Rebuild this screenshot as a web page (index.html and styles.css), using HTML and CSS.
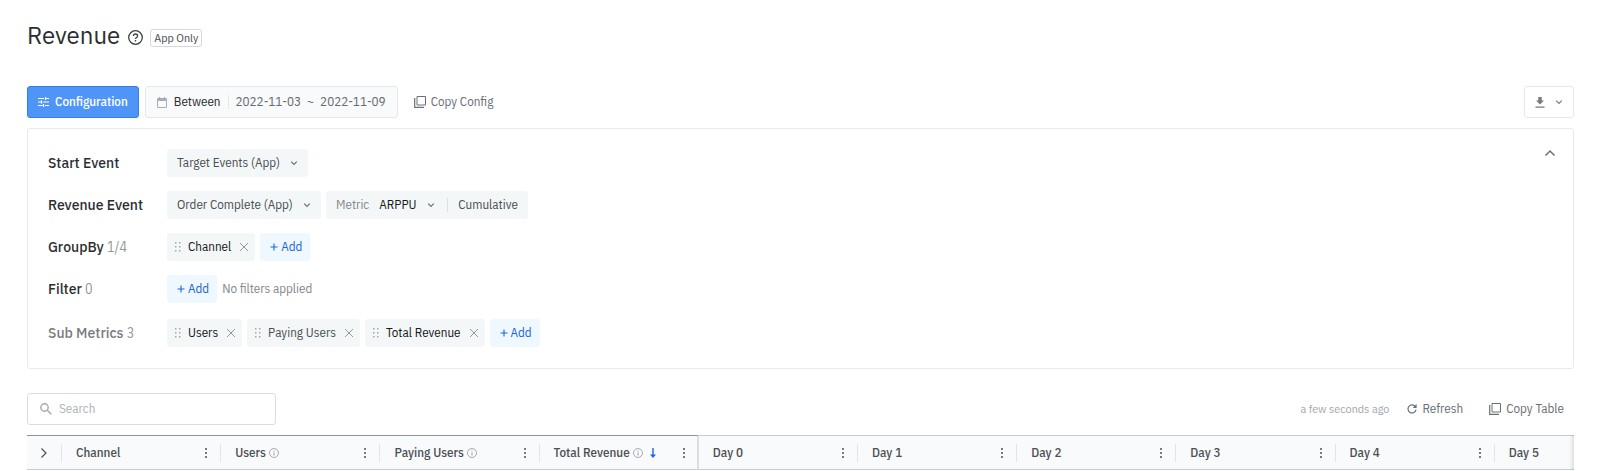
FILE: index.html
```html
<!DOCTYPE html>
<html lang="en">
<head>
  <meta charset="UTF-8" />
  <meta name="viewport" content="width=device-width, initial-scale=1.0"/>
  <title>Revenue</title>
  <link rel="stylesheet" href="styles.css">
</head>
<body>
  <!-- Shared icons -->
  <svg class="sprite" aria-hidden="true">
    <symbol id="chevron" viewBox="0 0 8 8"><path d="M1.2 2.6L4 5.400l2.800-2.800" fill="none" stroke="currentColor" stroke-width="1.200"/></symbol>
    <symbol id="grip" viewBox="0 0 6 10"><path d="M0 0h1.500v1.500H0zM4 0h1.500v1.500H4zM0 4h1.500v1.500H0zM4 4h1.500v1.500H4zM0 8h1.500v1.500H0zM4 8h1.500v1.500H4z" fill="currentColor"/></symbol>
    <symbol id="close" viewBox="0 0 10 10"><path d="M1 1l8 8M9 1l-8 8" fill="none" stroke="currentColor"/></symbol>
    <symbol id="plus" viewBox="0 0 8 8"><path d="M4 .5v7M.5 4h7" fill="none" stroke="currentColor" stroke-width="1.100"/></symbol>
    <symbol id="copy" viewBox="0 0 12 12"><path d="M3 .5h8.500V9H3z" fill="none" stroke="currentColor"/><path d="M.7 2v9.300H10" fill="none" stroke="currentColor" stroke-width="1.200"/></symbol>
    <symbol id="kebab" viewBox="0 0 2 10"><path d="M0 0h2v2H0zM0 4h2v2H0zM0 8h2v2H0z" fill="currentColor"/></symbol>
    <symbol id="info" viewBox="0 0 10 10"><circle cx="5" cy="5" r="4.500" fill="none" stroke="currentColor" stroke-width=".8"/><path d="M5 4.300v3.200M5 2.400v1" stroke="currentColor" stroke-width=".9"/></symbol>
  </svg>

  <header class="page-header">
    <h1 class="title">Revenue</h1>
    <button class="help" aria-label="Help">
      <svg width="15" height="15" viewBox="0 0 15 15" fill="none" stroke="currentColor" stroke-width="1.300"><circle cx="7.500" cy="7.500" r="6.800"/><path d="M5.400 6.100c0-1.300.9-2.100 2.100-2.100s2.100.8 2.100 1.900c0 1.500-2.100 1.600-2.100 3.200M7.500 10.100v1.400"/></svg>
    </button>
    <span class="tag">App Only</span>
  </header>

  <div class="toolbar">
    <button class="btn btn-primary">
      <svg width="11" height="10" viewBox="0 0 11 10" fill="none" stroke="currentColor" stroke-width="1.200"><path d="M0 1.500h6M8 1.500h3M7.500 0v3M0 5h3M5 5h6M3.500 3.500v3M0 8.500h4.500M7 8.500h4M5.500 7v3"/></svg>
      Configuration
    </button>
    <button class="btn btn-date">
      <svg width="10" height="11" viewBox="0 0 10 11"><path d="M1 1.500h8a.5.5 0 0 1 .5.500v8a.5.5 0 0 1-.5.500H1a.5.5 0 0 1-.5-.500V2a.5.5 0 0 1 .5-.500z" fill="none" stroke="currentColor"/><path d="M.5 1.500h9V4h-9zM2 0h1.200v2H2zM6.800 0H8v2H6.800z" fill="currentColor"/></svg>
      <span class="date-mode">Between</span>
      <span class="date-range"><span>2022-11-03</span><span>~</span><span>2022-11-09</span></span>
    </button>
    <button class="link-btn">
      <svg width="12" height="12"><use href="#copy"/></svg>
      Copy Config
    </button>
    <button class="btn btn-download" aria-label="Download">
      <svg width="10" height="11" viewBox="0 0 10 11"><path d="M3.300 0h3.400v3.500H9L5 7.500 1 3.500h2.300zM.5 9.500h9v1.200h-9z" fill="currentColor"/></svg>
      <svg width="8" height="8"><use href="#chevron"/></svg>
    </button>
  </div>

  <section class="panel">
    <div class="rows">
      <div class="row">
        <label class="row-label" for="startEvent">Start Event</label>
        <div class="chips">
          <div class="chip select">
            <select id="startEvent"><option>Target Events (App)</option></select>
            <svg width="8" height="8"><use href="#chevron"/></svg>
          </div>
        </div>
      </div>
      <div class="row">
        <label class="row-label" for="revenueEvent">Revenue Event</label>
        <div class="chips">
          <div class="chip select">
            <select id="revenueEvent"><option>Order Complete (App)</option></select>
            <svg width="8" height="8"><use href="#chevron"/></svg>
          </div>
          <div class="chip select">
            <label class="metric-label" for="metric">Metric</label>
            <select id="metric" class="strong"><option>ARPPU</option></select>
            <svg width="8" height="8"><use href="#chevron"/></svg>
            <button class="metric-mode">Cumulative</button>
          </div>
        </div>
      </div>
      <div class="row">
        <div class="row-label">GroupBy <span class="count">1/4</span></div>
        <div class="chips">
          <div class="chip drag strong"><svg class="grip" width="6" height="10"><use href="#grip"/></svg>Channel<button class="remove" aria-label="Remove Channel"><svg width="10" height="10"><use href="#close"/></svg></button></div>
          <button class="add"><svg width="8" height="8"><use href="#plus"/></svg>Add</button>
        </div>
      </div>
      <div class="row">
        <div class="row-label">Filter <span class="count">0</span></div>
        <div class="chips">
          <button class="add"><svg width="8" height="8"><use href="#plus"/></svg>Add</button>
          <span class="empty">No filters applied</span>
        </div>
      </div>
      <div class="row row-sub">
        <div class="row-label muted">Sub Metrics <span class="count">3</span></div>
        <div class="chips">
          <div class="chip drag strong"><svg class="grip" width="6" height="10"><use href="#grip"/></svg>Users<button class="remove" aria-label="Remove Users"><svg width="10" height="10"><use href="#close"/></svg></button></div>
          <div class="chip drag"><svg class="grip" width="6" height="10"><use href="#grip"/></svg>Paying Users<button class="remove" aria-label="Remove Paying Users"><svg width="10" height="10"><use href="#close"/></svg></button></div>
          <div class="chip drag strong"><svg class="grip" width="6" height="10"><use href="#grip"/></svg>Total Revenue<button class="remove" aria-label="Remove Total Revenue"><svg width="10" height="10"><use href="#close"/></svg></button></div>
          <button class="add"><svg width="8" height="8"><use href="#plus"/></svg>Add</button>
        </div>
      </div>
    </div>
    <button class="collapse" aria-label="Collapse">
      <svg width="12" height="8" viewBox="0 0 12 8"><path d="M1.500 6.500L6 2l4.500 4.500" fill="none" stroke="currentColor" stroke-width="1.500"/></svg>
    </button>
  </section>

  <div class="table-bar">
    <label class="search">
      <svg width="12" height="12" viewBox="0 0 12 12" fill="none" stroke="currentColor" stroke-width="1.400"><circle cx="4.500" cy="4.500" r="3.700"/><path d="M7.300 7.300l4 4"/></svg>
      <input type="text" placeholder="Search" aria-label="Search">
    </label>
    <div class="table-actions">
      <span class="updated">a few seconds ago</span>
      <button class="link-btn">
        <svg width="10" height="10" viewBox="0 0 10 10"><path d="M8.300 2.600A4 4 0 1 0 9 5.600" fill="none" stroke="currentColor" stroke-width="1.200"/><path d="M9.600 0v4H5.600z" fill="currentColor"/></svg>
        Refresh
      </button>
      <button class="link-btn">
        <svg width="12" height="12"><use href="#copy"/></svg>
        Copy Table
      </button>
    </div>
  </div>

  <div class="table-wrap">
    <table>
      <thead>
        <tr>
          <th class="expand"><div class="cell"><button aria-label="Expand"><svg width="8" height="12" viewBox="0 0 8 12"><path d="M1.500 1.500L6 6l-4.500 4.500" fill="none" stroke="currentColor" stroke-width="1.200"/></svg></button></div></th>
          <th class="fixed"><div class="cell">Channel<button class="menu" aria-label="Channel menu"><svg width="2" height="10"><use href="#kebab"/></svg></button></div></th>
          <th class="fixed"><div class="cell">Users<svg class="info" width="10" height="10"><use href="#info"/></svg><button class="menu" aria-label="Users menu"><svg width="2" height="10"><use href="#kebab"/></svg></button></div></th>
          <th class="fixed"><div class="cell">Paying Users<svg class="info" width="10" height="10"><use href="#info"/></svg><button class="menu" aria-label="Paying Users menu"><svg width="2" height="10"><use href="#kebab"/></svg></button></div></th>
          <th class="fixed last"><div class="cell">Total Revenue<svg class="info" width="10" height="10"><use href="#info"/></svg><svg class="sort" width="6" height="10" viewBox="0 0 6 10"><path d="M3 0v8" stroke="currentColor" stroke-width="1.400"/><path d="M0 6.500h6L3 10z" fill="currentColor"/></svg><button class="menu" aria-label="Total Revenue menu"><svg width="2" height="10"><use href="#kebab"/></svg></button></div></th>
          <th><div class="cell">Day 0<button class="menu" aria-label="Day 0 menu"><svg width="2" height="10"><use href="#kebab"/></svg></button></div></th>
          <th><div class="cell">Day 1<button class="menu" aria-label="Day 1 menu"><svg width="2" height="10"><use href="#kebab"/></svg></button></div></th>
          <th><div class="cell">Day 2<button class="menu" aria-label="Day 2 menu"><svg width="2" height="10"><use href="#kebab"/></svg></button></div></th>
          <th><div class="cell">Day 3<button class="menu" aria-label="Day 3 menu"><svg width="2" height="10"><use href="#kebab"/></svg></button></div></th>
          <th><div class="cell">Day 4<button class="menu" aria-label="Day 4 menu"><svg width="2" height="10"><use href="#kebab"/></svg></button></div></th>
          <th><div class="cell">Day 5</div></th>
        </tr>
      </thead>
    </table>
  </div>
</body>
</html>
```
FILE: styles.css
```css
* {
  box-sizing: border-box;
}

body {
  font-family: "IBM Plex Sans Condensed", Roboto, "Liberation Sans", sans-serif;
  font-size: 13px;
  line-height: 20px;
  color: #4b5054;
  background: #fff;
  margin: 0;
  padding: 19px 26px 0 27px;
}

button,
select,
input {
  font: inherit;
  color: inherit;
  background: none;
  border: none;
  margin: 0;
  padding: 0;
}

button {
  display: flex;
  align-items: center;
  white-space: nowrap;
  cursor: pointer;
}

svg {
  display: block;
  flex: none;
}

.sprite {
  position: absolute;
  width: 0;
  height: 0;
}

/* Header */
.page-header {
  display: flex;
  align-items: center;
  height: 32px;
}

.title {
  font-family: "IBM Plex Sans", Roboto, "Liberation Sans", sans-serif;
  font-size: 24px;
  line-height: 32px;
  font-weight: normal;
  color: #2b2e31;
  margin: 0;
}

.help {
  color: #3c4043;
  margin: 5px 7px 0 8px;
}

.tag {
  font-size: 12px;
  line-height: 16px;
  padding: 0 3px;
  margin-top: 5px;
  border: 1px solid #d5d9dc;
  border-radius: 3px;
}

/* Toolbar */
.toolbar {
  display: flex;
  align-items: center;
  gap: 6px;
  margin-top: 35px;
}

.btn {
  height: 32px;
  border: 1px solid #e4e8ea;
  border-radius: 3px;
  padding: 0 11px;
}

.btn-primary {
  gap: 6px;
  color: #fff;
  font-weight: 500;
  background: #4f95f8;
  border-color: #2f80ed;
  padding: 0 10px;
}

.btn-date {
  gap: 7px;
  background: #f8fafb;
  color: #666b6f;
}

.btn-date svg {
  color: #aaaeb1;
}

.date-mode {
  line-height: 14px;
  color: #2b2e31;
  padding-right: 7px;
  border-right: 1px solid #e4e8ea;
}

.date-range {
  display: flex;
  gap: 6px;
}

.link-btn {
  gap: 5px;
  color: #6b7074;
}

.toolbar .link-btn {
  margin-left: 10px;
}

.btn-download {
  gap: 10px;
  color: #777b7e;
  margin-left: auto;
  padding: 0 10px;
}

/* Configuration panel */
.panel {
  display: flex;
  justify-content: space-between;
  align-items: flex-start;
  margin-top: 10px;
  padding: 20px 17px 21px 20px;
  border: 1px solid #e8eaec;
  border-radius: 3px;
}

.rows {
  display: flex;
  flex-direction: column;
  gap: 14px;
}

.row {
  display: flex;
  align-items: center;
}

.row-sub {
  margin-top: 2px;
}

.row-label {
  width: 119px;
  font-family: "IBM Plex Sans", Roboto, "Liberation Sans", sans-serif;
  font-size: 14px;
  font-weight: 500;
  color: #2b2e31;
}

.row-label.muted {
  color: #777b7e;
}

.count {
  font-family: "IBM Plex Sans Condensed", Roboto, "Liberation Sans", sans-serif;
  font-weight: normal;
  color: #94989b;
}

.chips {
  display: flex;
  align-items: center;
  gap: 5px;
}

.chip {
  display: flex;
  align-items: center;
  height: 28px;
  padding: 0 10px;
  background: #f4f7f8;
  border-radius: 3px;
}

.chip select {
  appearance: none;
  padding-right: 18px;
  margin-right: -8px;
  cursor: pointer;
}

.chip svg {
  pointer-events: none;
  color: #6b7074;
}

.strong {
  color: #17191b;
}

.metric-label {
  color: #85898c;
  margin-right: 10px;
}

.metric-mode {
  margin-left: 12px;
  padding-left: 10px;
  line-height: 14px;
  border-left: 1px solid #dde1e3;
}

.chip.drag {
  padding: 0 6px 0 8px;
}

.chip .grip {
  color: #a4a8ab;
  margin-right: 7px;
}

.chip .remove svg {
  color: #94989b;
}

.remove {
  margin-left: 8px;
}

.add {
  gap: 3px;
  height: 28px;
  padding: 0 8px 0 10px;
  color: #1a66e0;
  background: #eff8ff;
  border-radius: 3px;
}

.empty {
  color: #85898c;
}

.collapse {
  color: #6b7074;
}

/* Table */
.table-bar {
  display: flex;
  justify-content: space-between;
  align-items: center;
  margin-top: 24px;
}

.search {
  display: flex;
  align-items: center;
  gap: 7px;
  width: 249px;
  height: 32px;
  padding: 0 12px;
  color: #a4a8ab;
  border: 1px solid #d9dde3;
  border-radius: 3px;
}

.search input {
  flex: 1;
  min-width: 0;
  color: #2b2e31;
  outline: none;
}

.search input::placeholder {
  color: #b0b4b8;
}

.table-actions {
  display: flex;
  align-items: center;
  padding-right: 10px;
}

.table-actions .link-btn + .link-btn {
  margin-left: 26px;
}

.updated {
  font-size: 12px;
  color: #a4a8ab;
  margin-right: 18px;
}

.table-wrap {
  margin-top: 10px;
  overflow: hidden;
  position: relative;
}

/* Scroll shadow on the right edge */
.table-wrap::after {
  content: "";
  position: absolute;
  top: 0;
  right: 0;
  bottom: 0;
  width: 5px;
  background: linear-gradient(to right, transparent, rgba(0, 0, 0, 0.1));
}

table {
  table-layout: fixed;
  width: 1627px;
  border-collapse: separate;
  border-spacing: 0;
}

th {
  height: 35px;
  padding: 0;
  font-weight: 500;
  text-align: left;
  background: #f8fafb;
  border-top: 1px solid #c8ccd0;
  border-bottom: 1px solid #c3ced6;
}

th.expand {
  width: 35px;
}

th.expand,
th.fixed {
  border-top-color: #8f9396;
}

th.last {
  border-right: 2px solid #dcdfe1;
}

.cell {
  display: flex;
  align-items: center;
  height: 18px;
  padding: 0 13px 0 14px;
  border-right: 1px solid #dfe5e8;
}

.expand .cell {
  padding: 0 0 0 13px;
}

.last .cell {
  padding-right: 12px;
  border-right: none;
}

.info {
  color: #94989b;
  margin-left: 3px;
}

.sort {
  color: #1a66e0;
  margin-left: 7px;
}

.menu {
  color: #777b7e;
  margin-left: auto;
}
```
